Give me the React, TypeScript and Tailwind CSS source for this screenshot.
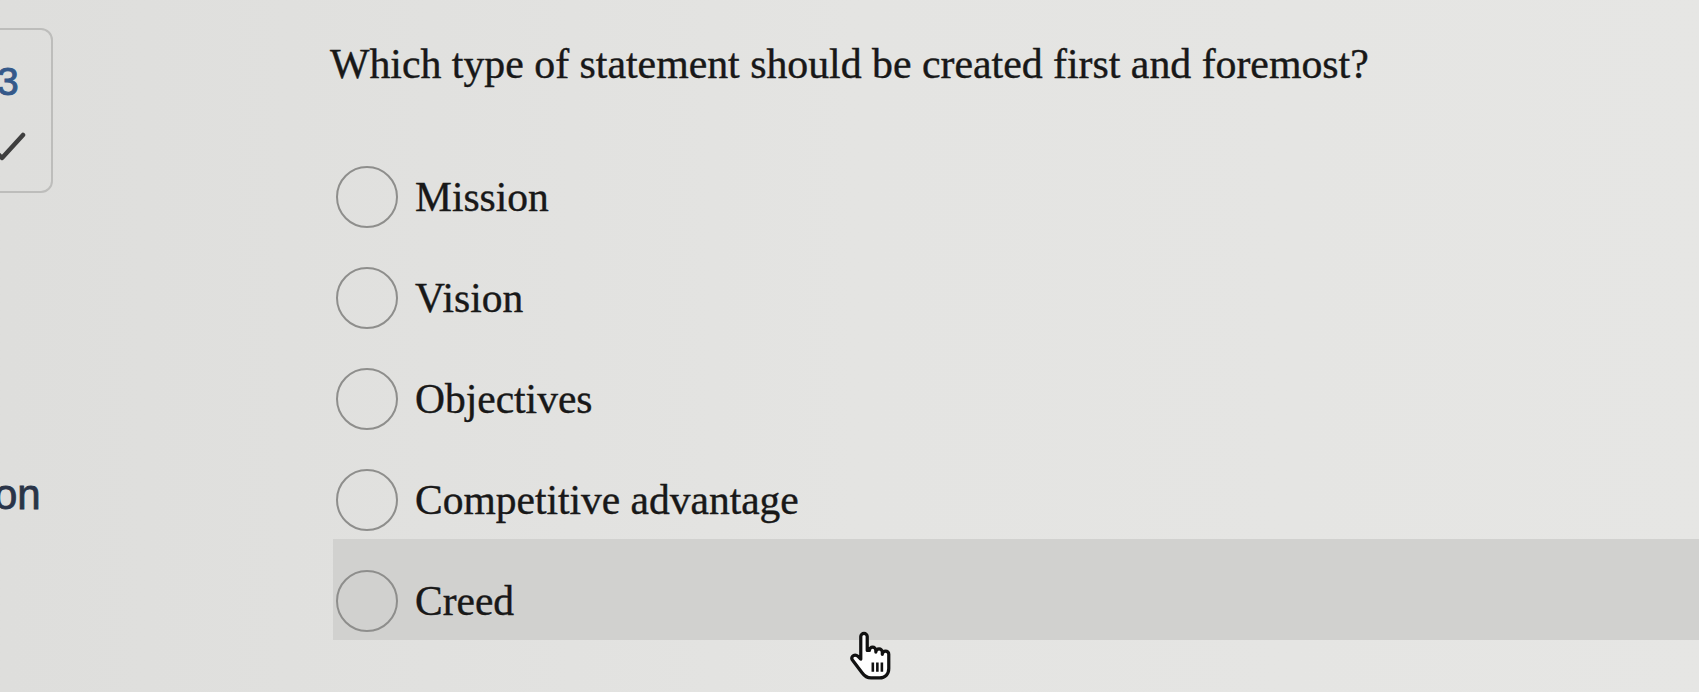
import React from "react";

const options = ["Mission", "Vision", "Objectives", "Competitive advantage", "Creed"];

function HandCursor() {
  return (
    <svg width="42" height="52" viewBox="0 0 19.5 24" className="block">
      <path
        d="M6.5 1.5 C5.7 1.5 5 2.2 5 3 V13.5 L3.6 12.1 C2.9 11.4 1.8 11.4 1.2 12.1 C0.7 12.7 0.8 13.5 1.3 14.1 L5.6 19.8 C6.6 21.2 8 22.2 9.8 22.2 H13.8 C16.3 22.2 18 20.4 18 17.8 V11.2 C18 10.4 17.3 9.7 16.5 9.7 C15.7 9.7 15 10.4 15 11.2 V10.2 C15 9.4 14.3 8.7 13.5 8.7 C12.7 8.7 12 9.4 12 10.2 V9.4 C12 8.6 11.3 7.9 10.5 7.9 C9.7 7.9 9 8.6 9 9.4 L8 9.4 V3 C8 2.2 7.3 1.5 6.5 1.5 Z"
        fill="#ffffff"
        stroke="#111111"
        strokeWidth="1.5"
        strokeLinejoin="round"
      />
      <path d="M10.6 15 V19.3 M12.7 15 V19.3 M14.8 15 V19.3" stroke="#111111" strokeWidth="1.2" />
    </svg>
  );
}

export default function App() {
  return (
    <div
      className="relative flex h-[692px] w-full overflow-hidden bg-gradient-to-r from-[#dededc] via-[#e4e4e2] to-[#e6e6e4]"
      style={{ fontFamily: '"Liberation Serif", "Times New Roman", serif' }}
    >
      {/* left column */}
      <div className="flex w-[328px] shrink-0 flex-col">
        <div className="-ml-[20px] mt-[28px] h-[165px] w-[73px] rounded-[12px] border-2 border-[#bdbdbb] pt-[32px] pl-[15px]">
          <div
            className="text-[39px] leading-[39px] text-[#35598a] [-webkit-text-stroke:1px_#35598a]"
            style={{ fontFamily: '"Liberation Sans", Arial, sans-serif' }}
          >
            3
          </div>
          <svg width="69" height="60" viewBox="0 0 69 60" className="-ml-[15px] block">
            <path d="M8 45 L20 57 L41 34" fill="none" stroke="#3f3f3f" strokeWidth="4.5" strokeLinecap="round" strokeLinejoin="round" />
          </svg>
        </div>
        <div
          className="-ml-[6px] mt-[281px] text-[42px] leading-[42px] text-[#2a3448] [-webkit-text-stroke:0.8px_#2a3448]"
          style={{ fontFamily: '"Liberation Sans", Arial, sans-serif' }}
        >
          on
        </div>
      </div>

      {/* main column */}
      <div className="flex min-w-0 flex-1 flex-col pt-[40px]">
        <div className="pl-[2px] text-[41.8px] leading-[48px] text-[#181818] whitespace-nowrap [-webkit-text-stroke:0.4px_#181818]">
          Which type of statement should be created first and foremost?
        </div>
        <div className="ml-[5px] mt-[47px] flex flex-col">
          {options.map((o, i) => (
            <div
              key={o}
              className={
                i === options.length - 1
                  ? "flex h-[101px] items-center gap-[17px] bg-[#d1d1cf] pl-[3px] pt-[22px]"
                  : "flex h-[101px] items-center gap-[17px] pl-[3px] pt-[22px]"
              }
            >
              <div className="h-[62px] w-[62px] shrink-0 rounded-full border-[2.5px] border-[#8e8e8c]" />
              <div className="text-[41.5px] leading-[48px] text-[#181818] whitespace-nowrap [-webkit-text-stroke:0.4px_#181818]">
                {o}
              </div>
            </div>
          ))}
        </div>
      </div>

      {/* cursor */}
      <div className="absolute left-[850px] top-[630px]">
        <HandCursor />
      </div>
    </div>
  );
}
